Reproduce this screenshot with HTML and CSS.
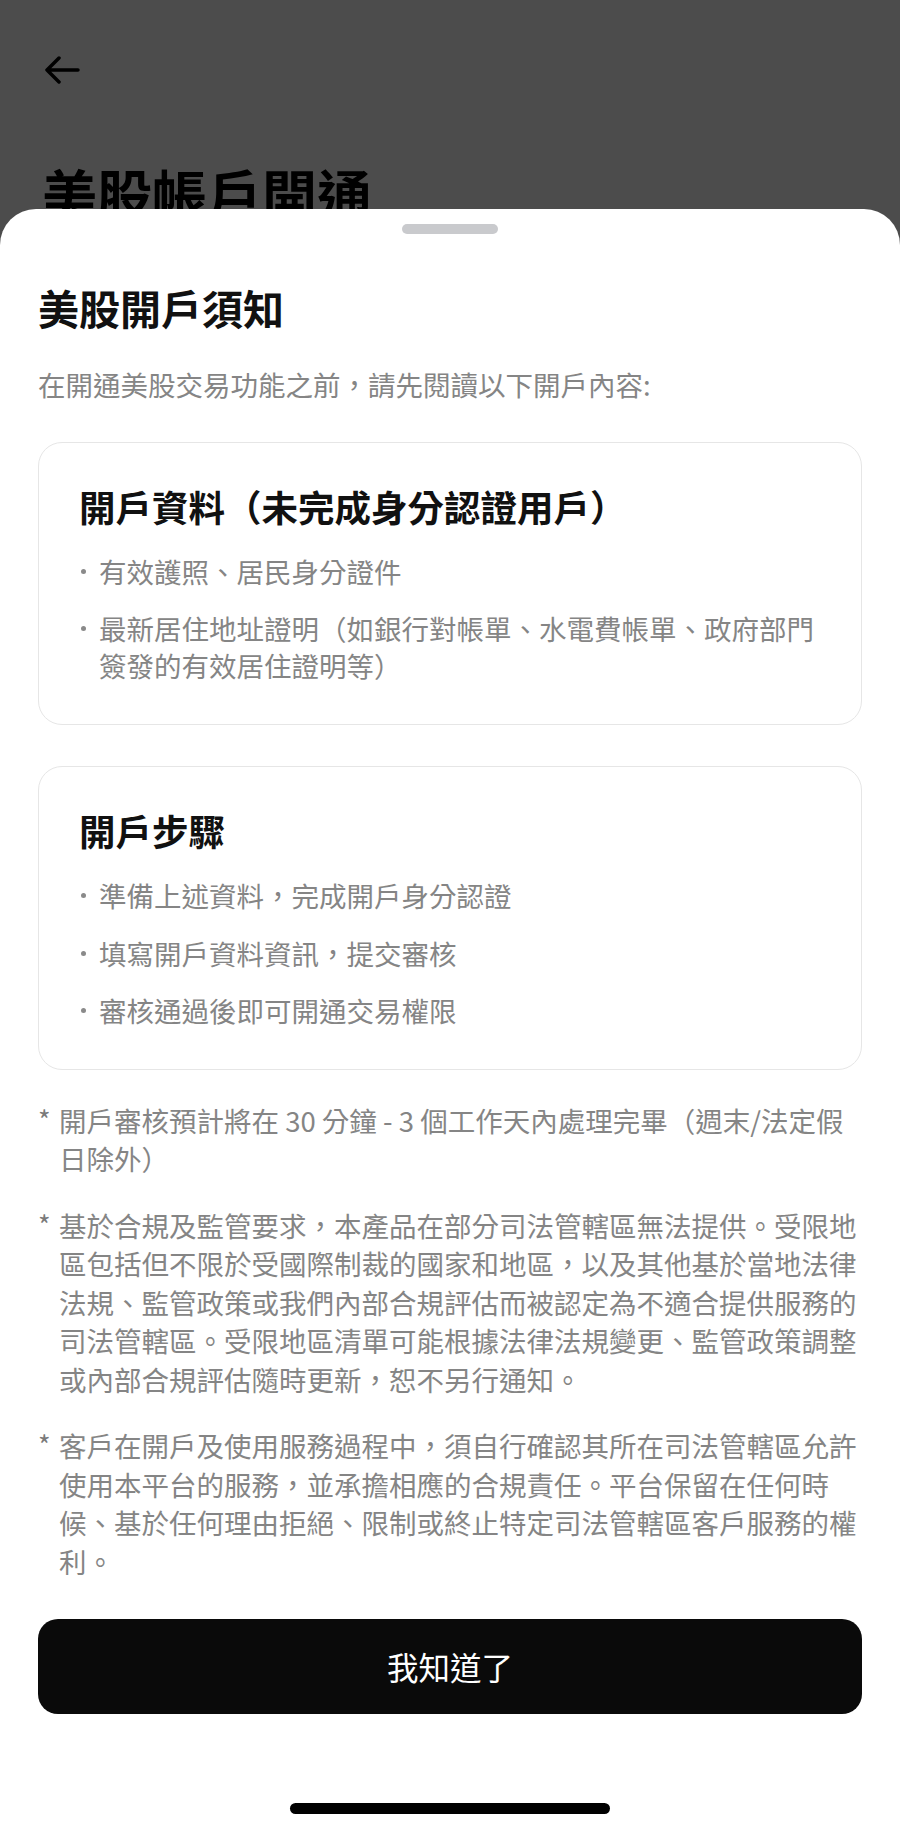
FILE: index.html
```html
<!DOCTYPE html>
<html lang="zh-Hant">
<head>
<meta charset="utf-8">
<title>美股帳戶開通</title>
<link rel="stylesheet" href="styles.css">
</head>
<body>
<div class="page">
  <header class="page-header">
    <svg class="back-icon" viewBox="0 0 36 28" width="36" height="28" aria-hidden="true">
      <path d="M34 14H3M15 2L3 14l12 12" fill="none" stroke="#000" stroke-width="3.5" stroke-linecap="round" stroke-linejoin="round"/>
    </svg>
    <h1 class="page-title">美股帳戶開通</h1>
  </header>
</div>

<div class="overlay"></div>

<section class="sheet">
  <div class="handle"></div>
  <h2 class="sheet-title">美股開戶須知</h2>
  <p class="sheet-sub">在開通美股交易功能之前，請先閱讀以下開戶內容:</p>

  <div class="card">
    <h3 class="card-title">開戶資料（未完成身分認證用戶）</h3>
    <ul class="list">
      <li class="item"><span class="dot"></span><span class="item-text">有效護照、居民身分證件</span></li>
      <li class="item"><span class="dot"></span><span class="item-text">最新居住地址證明（如銀行對帳單、水電費帳單、政府部門簽發的有效居住證明等）</span></li>
    </ul>
  </div>

  <div class="card card-gap">
    <h3 class="card-title">開戶步驟</h3>
    <ul class="list">
      <li class="item"><span class="dot"></span><span class="item-text">準備上述資料，完成開戶身分認證</span></li>
      <li class="item"><span class="dot"></span><span class="item-text">填寫開戶資料資訊，提交審核</span></li>
      <li class="item"><span class="dot"></span><span class="item-text">審核通過後即可開通交易權限</span></li>
    </ul>
  </div>

  <div class="notes">
    <p class="note"><span class="star">*</span><span class="note-text">開戶審核預計將在 30 分鐘 - 3 個工作天內處理完畢（週末/法定假日除外）</span></p>
    <p class="note"><span class="star">*</span><span class="note-text">基於合規及監管要求，本產品在部分司法管轄區無法提供。受限地區包括但不限於受國際制裁的國家和地區，以及其他基於當地法律法規、監管政策或我們內部合規評估而被認定為不適合提供服務的司法管轄區。受限地區清單可能根據法律法規變更、監管政策調整或內部合規評估隨時更新，恕不另行通知。</span></p>
    <p class="note"><span class="star">*</span><span class="note-text">客戶在開戶及使用服務過程中，須自行確認其所在司法管轄區允許使用本平台的服務，並承擔相應的合規責任。平台保留在任何時候、基於任何理由拒絕、限制或終止特定司法管轄區客戶服務的權利。</span></p>
  </div>

  <button class="confirm" type="button">我知道了</button>

  <div class="home-indicator"></div>
</section>
</body>
</html>
```

FILE: styles.css
```css
* {
  box-sizing: border-box;
}

html, body {
  margin: 0;
  padding: 0;
}

body {
  width: 900px;
  height: 1833px;
  overflow: hidden;
  background: #ffffff;
  font-family: "Noto Sans CJK TC", "Noto Sans", sans-serif;
  color: #111111;
  position: relative;
}

.page {
  height: 100%;
}

.page-header {
  padding: 56px 40px 0 44px;
}

.back-icon {
  display: block;
}

.page-title {
  margin: 75px 0 0 -2px;
  font-size: 55px;
  line-height: 66px;
  font-weight: 700;
  color: #000;
}

.overlay {
  position: absolute;
  inset: 0;
  background: rgba(0, 0, 0, 0.7);
}

.sheet {
  position: absolute;
  top: 209px;
  left: 0;
  right: 0;
  bottom: 0;
  background: #ffffff;
  border-radius: 36px 36px 0 0;
  padding: 15px 38px 19px;
  display: flex;
  flex-direction: column;
}

.handle {
  width: 96px;
  height: 9.5px;
  border-radius: 5px;
  background: #c9cacd;
  align-self: center;
  flex: none;
}

.sheet-title {
  margin: 45px 0 0;
  font-size: 41px;
  line-height: 56px;
  font-weight: 700;
  color: #111111;
}

.sheet-sub {
  margin: 30px 0 0;
  font-size: 27.5px;
  line-height: 38px;
  color: #858585;
}

.card {
  margin-top: 39px;
  border: 1.5px solid #e6e6e6;
  border-radius: 24px;
  padding: 38px 40px 40px;
}

.card-gap {
  margin-top: 41px;
}

.card-title {
  margin: 0;
  font-size: 36.5px;
  line-height: 51px;
  font-weight: 700;
  color: #111111;
}

.list {
  list-style: none;
  margin: 21px 0 0;
  padding: 0;
  display: flex;
  flex-direction: column;
  gap: 20.5px;
}

.item {
  display: flex;
  font-size: 27.5px;
  line-height: 37px;
  color: #858585;
}

.dot {
  flex: none;
  width: 20px;
  height: 37px;
  display: flex;
  align-items: center;
}

.dot::before {
  content: "";
  width: 5px;
  height: 5px;
  margin-left: 2px;
  border-radius: 50%;
  background: #8a8a8a;
}

.item-text {
  flex: 1;
  min-width: 0;
}

.notes {
  margin-top: 30.5px;
  display: flex;
  flex-direction: column;
  gap: 28px;
}

.note {
  margin: 0;
  display: flex;
  font-size: 27.5px;
  line-height: 38.5px;
  color: #858585;
}

.star {
  flex: none;
  width: 21px;
  font-size: 27px;
  color: #7a7a7a;
}

.note-text {
  flex: 1;
  min-width: 0;
}

.confirm {
  margin-top: 38.5px;
  height: 95px;
  width: 100%;
  border: none;
  border-radius: 20px;
  background: #0a0a0a;
  color: #ffffff;
  font-family: "Noto Sans CJK TC", "Noto Sans", sans-serif;
  font-size: 31.5px;
  font-weight: 400;
  flex: none;
}

.home-indicator {
  margin-top: auto;
  align-self: center;
  width: 320px;
  height: 11.5px;
  border-radius: 6px;
  background: #000000;
  flex: none;
}
```
